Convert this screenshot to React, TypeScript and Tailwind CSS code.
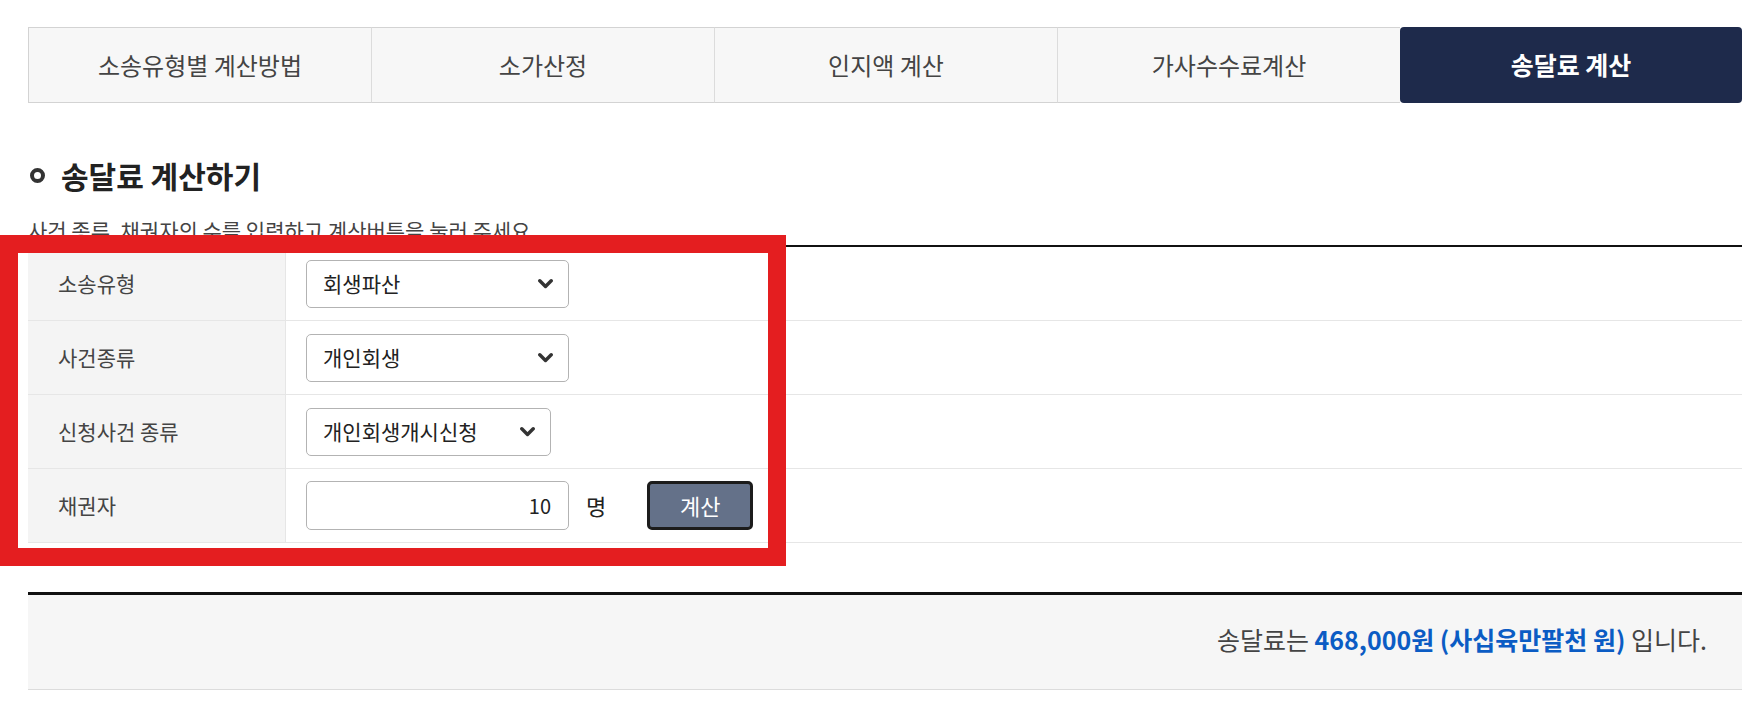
import React from "react";

const FONT = { fontFamily: '"Noto Sans CJK KR", "Noto Sans", sans-serif' };

function Chevron() {
  return (
    <svg width="15" height="10" viewBox="0 0 15 10" className="shrink-0">
      <polyline points="1.8,1.8 7.5,7.5 13.2,1.8" fill="none" stroke="#333" strokeWidth="3.4" strokeLinecap="round" strokeLinejoin="round" />
    </svg>
  );
}

function Select({ value, w }: { value: string; w: string }) {
  return (
    <div className={`${w} h-[48px] border border-[#b3b3b3] rounded-[5px] bg-white pl-[16px] pr-[15px] flex items-center justify-between`}>
      <span className="text-[21px] text-[#222]">{value}</span>
      <Chevron />
    </div>
  );
}

function Row({ label, children }: { label: string; children: React.ReactNode }) {
  return (
    <div className="flex h-[74px] border-b border-[#e6e6e6]">
      <div className="w-[258px] shrink-0 bg-[#f4f4f4] border-r border-[#e6e6e6] pl-[30px] flex items-center text-[21px] text-[#444]">
        {label}
      </div>
      <div className="flex-1 pl-[20px] flex items-center">{children}</div>
    </div>
  );
}

export default function App() {
  const tabs = ["소송유형별 계산방법", "소가산정", "인지액 계산", "가사수수료계산"];
  return (
    <div style={FONT} className="relative w-[1759px] h-[720px] bg-white overflow-hidden">
      <div className="pt-[27px] pl-[28px] w-[1742px]">
        {/* Tabs */}
        <div className="flex h-[76px]">
          {tabs.map((t, i) => (
            <div
              key={t}
              className={`flex-1 flex items-center justify-center bg-[#f7f7f7] border-y border-[#d3d3d3] border-l ${i === 0 ? "border-l-[#d3d3d3]" : "border-l-[#dcdcdc]"} text-[24px] text-[#444]`}
            >
              {t}
            </div>
          ))}
          <div className="flex-1 flex items-center justify-center bg-[#1e2a4b] rounded-[4px] text-[25px] font-bold text-white">
            송달료 계산
          </div>
        </div>

        {/* Heading */}
        <div className="mt-[52px] flex items-center h-[40px]">
          <span className="w-[15px] h-[15px] rounded-full border-[4px] border-[#333] ml-[2px]" />
          <span className="ml-[16px] text-[30px] font-bold text-[#222] leading-[40px]">송달료 계산하기</span>
        </div>
        <div className="mt-[21px] text-[21px] text-[#444] leading-[28px] h-[28px]">
          사건 종류, 채권자의 수를 입력하고 계산버튼을 눌러 주세요
        </div>

        {/* Form table */}
        <div className="mt-[1px] border-t-2 border-[#111]">
          <Row label="소송유형">
            <Select value="회생파산" w="w-[263px]" />
          </Row>
          <Row label="사건종류">
            <Select value="개인회생" w="w-[263px]" />
          </Row>
          <Row label="신청사건 종류">
            <Select value="개인회생개시신청" w="w-[245px]" />
          </Row>
          <Row label="채권자">
            <div className="w-[263px] h-[49px] border border-[#b3b3b3] rounded-[5px] bg-white pr-[17px] flex items-center justify-end text-[20px] text-[#222]">
              10
            </div>
            <span className="ml-[17px] text-[22px] text-[#222]">명</span>
            <button className="ml-[41px] w-[106px] h-[49px] rounded-[5px] border-[3px] border-[#1c1c1c] bg-[#647189] text-white text-[22px]">
              계산
            </button>
          </Row>
        </div>

        {/* Result */}
        <div className="mt-[49px] border-t-[3px] border-[#111] bg-[#f6f6f6] border-b border-b-[#dcdcdc] h-[98px] pb-[4px] flex items-center justify-end pr-[35px] text-[25px] text-[#444]">
          <span>
            송달료는 <b className="text-[#0b5cc4] font-bold">468,000원 (사십육만팔천 원)</b> 입니다.
          </span>
        </div>
      </div>

      {/* Red annotation box */}
      <div className="absolute left-0 top-[235px] w-[786px] h-[331px] border-[18px] border-[#e41e20] pointer-events-none" />
    </div>
  );
}
